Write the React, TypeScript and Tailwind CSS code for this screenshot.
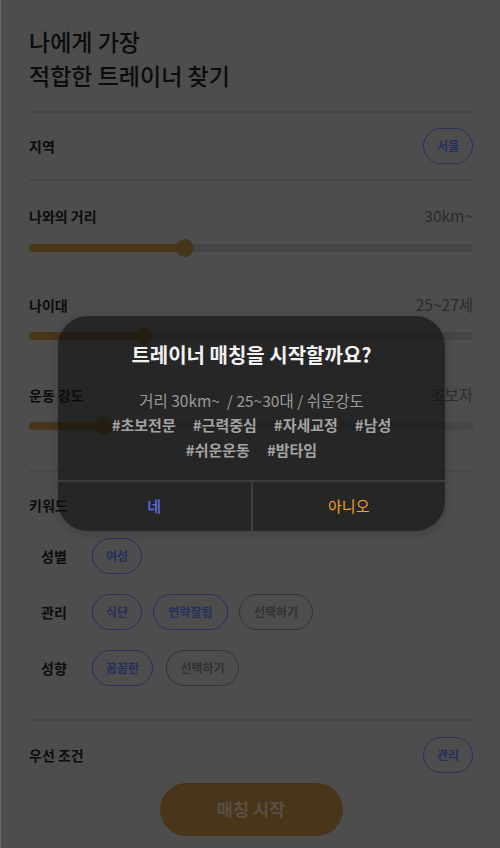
import React from "react";

const font = { fontFamily: '"Noto Sans CJK KR", "Noto Sans", sans-serif' };

function Slider({ pct }: { pct: number }) {
  return (
    <div className="relative h-[18px] flex items-center">
      <div className="w-full h-[8px] rounded-full bg-[#454545]" />
      <div
        className="absolute left-0 h-[8px] rounded-full bg-[#48351a]"
        style={{ width: `${pct}%` }}
      />
      <div
        className="absolute w-[18px] h-[18px] rounded-full bg-[#48351a] -translate-x-1/2"
        style={{ left: `${pct}%` }}
      />
    </div>
  );
}

function Pill({ children, on = true, w }: { children: React.ReactNode; on?: boolean; w: string }) {
  return (
    <div
      className={`h-[36px] ${w} rounded-full border flex items-center justify-center text-[12px] font-semibold ${
        on ? "border-[#262f5e] text-[#262f5e]" : "border-[#323232] text-[#323232]"
      }`}
    >
      {children}
    </div>
  );
}

export default function App() {
  return (
    <div style={font} className="relative w-[500px] h-[848px] bg-[#4d4d4d] border-l border-[#686868] overflow-hidden">
      <div className="pl-[28px] pr-[27px] pt-[24px]">
        <h1 className="text-[23px] leading-[34px] font-medium text-[#0c0c0c]">
          나에게 가장
          <br />
          적합한 트레이너 찾기
        </h1>
        <div className="mt-[19px] h-[2px] bg-[#464646]" />
        <div className="h-[66px] flex items-center justify-between">
          <span className="text-[14px] font-bold text-[#0c0c0c]">지역</span>
          <Pill w="w-[50px]">서울</Pill>
        </div>
        <div className="h-[2px] bg-[#464646]" />

        <div className="mt-[25px] flex justify-between items-center h-[20px]">
          <span className="text-[14px] font-bold text-[#0c0c0c]">나와의 거리</span>
          <span className="text-[15.5px] text-[#2c2c2c]">30km~</span>
        </div>
        <div className="mt-[13px]">
          <Slider pct={35.2} />
        </div>

        <div className="mt-[38px] flex justify-between items-center h-[20px]">
          <span className="text-[14px] font-bold text-[#0c0c0c]">나이대</span>
          <span className="text-[15.5px] text-[#2c2c2c]">25~27세</span>
        </div>
        <div className="mt-[12px]">
          <Slider pct={25.8} />
        </div>

        <div className="mt-[40px] flex justify-between items-center h-[20px]">
          <span className="text-[14px] font-bold text-[#0c0c0c]">운동 강도</span>
          <span className="text-[15.5px] text-[#2c2c2c]">초보자</span>
        </div>
        <div className="mt-[12px]">
          <Slider pct={16.8} />
        </div>

        <div className="mt-[35px] h-[2px] bg-[#464646]" />

        <div className="mt-[23px] h-[20px] flex items-center">
          <span className="text-[14px] font-bold text-[#0c0c0c]">키워드</span>
        </div>
        <div className="pl-[12px] mt-[23px] flex flex-col gap-[20px]">
          <div className="flex items-center">
            <span className="w-[51px] text-[14px] font-semibold text-[#0c0c0c]">성별</span>
            <Pill w="w-[50px]">여성</Pill>
          </div>
          <div className="flex items-center gap-[11px]">
            <span className="w-[40px] text-[14px] font-semibold text-[#0c0c0c]">관리</span>
            <Pill w="w-[50px]">식단</Pill>
            <Pill w="w-[75px]">연락잘됨</Pill>
            <Pill w="w-[74px]" on={false}>선택하기</Pill>
          </div>
          <div className="flex items-center gap-[13px]">
            <span className="w-[38px] text-[14px] font-semibold text-[#0c0c0c]">성향</span>
            <Pill w="w-[61px]">꼼꼼한</Pill>
            <Pill w="w-[73px]" on={false}>선택하기</Pill>
          </div>
        </div>

        <div className="mt-[33px] h-[2px] bg-[#464646]" />
        <div className="mt-[16px] h-[36px] flex items-center justify-between">
          <span className="text-[14px] font-bold text-[#0c0c0c]">우선 조건</span>
          <Pill w="w-[50px]">관리</Pill>
        </div>
        <div className="mt-[10px] flex justify-center">
          <div className="w-[183px] h-[53px] rounded-full bg-[#48351a] flex items-center justify-center text-[17.5px] font-bold text-[#5a5044]">
            매칭 시작
          </div>
        </div>
      </div>

      {/* Modal */}
      <div className="absolute left-[57px] top-[316px] w-[387px] h-[215px] rounded-[30px] bg-[rgba(14,14,14,0.6)] shadow-[0_2px_10px_rgba(0,0,0,0.2)] flex flex-col overflow-hidden">
        <div className="flex-1 flex flex-col items-center pt-[26px]">
          <div className="text-[20px] leading-[26px] font-bold text-[#f2f2f2]">트레이너 매칭을 시작할까요?</div>
          <div className="mt-[20px] text-[15.5px] leading-[24px] text-[#9a9a9a]">거리 30km~ &nbsp;/ 25~30대 / 쉬운강도</div>
          <div className="flex flex-wrap justify-center gap-x-[17px] w-[310px] text-[15px] leading-[25px] font-semibold text-[#a3a3a3]">
            <span>#초보전문</span>
            <span>#근력중심</span>
            <span>#자세교정</span>
            <span>#남성</span>
            <span>#쉬운운동</span>
            <span>#밤타임</span>
          </div>
        </div>
        <div className="h-[2px] bg-[#3b3b3b]" />
        <div className="h-[49px] flex">
          <div className="flex-1 flex items-center justify-center text-[15px] font-medium text-[#5b70e6]">네</div>
          <div className="w-[2px] bg-[#3f3f3f]" />
          <div className="flex-1 flex items-center justify-center text-[15px] text-[#f0a323]">아니오</div>
        </div>
      </div>
    </div>
  );
}
